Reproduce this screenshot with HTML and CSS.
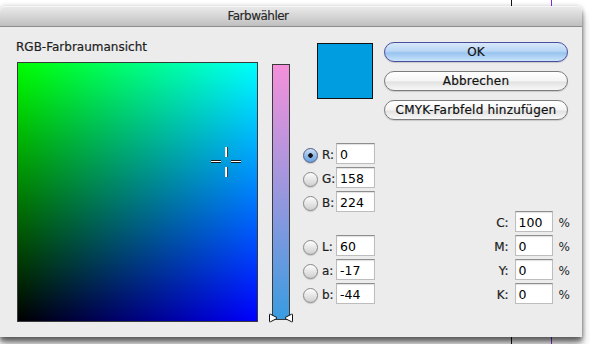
FILE: index.html
```html
<!DOCTYPE html>
<html lang="de">
<head>
  <meta charset="UTF-8">
  <title>Farbwähler</title>
  <link rel="stylesheet" href="styles.css">
</head>
<body>
<div class="doc-line black"></div>
<div class="doc-line purple"></div>

<div class="window">
  <div class="titlebar">Farbwähler</div>

  <div class="dialog-body">
    <div class="picker">
      <div class="picker-label">RGB-Farbraumansicht</div>
      <div class="color-field">
        <svg class="crosshair" width="32" height="32" viewBox="0 0 32 32">
          <rect x="15" y="1" width="1" height="10" fill="#e8e8e8"/>
          <rect x="16" y="1" width="1" height="10" fill="#ffffff"/>
          <rect x="17" y="1" width="1" height="10" fill="#5a3a30"/>
          <rect x="15" y="21" width="1" height="10" fill="#e8e8e8"/>
          <rect x="16" y="21" width="1" height="10" fill="#ffffff"/>
          <rect x="17" y="21" width="1" height="10" fill="#5a3a30"/>
          <rect x="1" y="14" width="10" height="1" fill="#1a1a1a"/>
          <rect x="1" y="15" width="10" height="1" fill="#ffffff"/>
          <rect x="1" y="16" width="10" height="1" fill="#1a1a1a"/>
          <rect x="21" y="14" width="10" height="1" fill="#1a1a1a"/>
          <rect x="21" y="15" width="10" height="1" fill="#ffffff"/>
          <rect x="21" y="16" width="10" height="1" fill="#1a1a1a"/>
        </svg>
      </div>
    </div>

    <div class="slider">
      <div class="slider-bar"></div>
      <svg class="slider-handles" width="26" height="10" viewBox="0 0 26 10">
        <path d="M1.5 1.5 Q1.5 0.8 2.4 1.2 L8.5 4.3 L8.5 5.7 L2.4 8.8 Q1.5 9.2 1.5 8.5 Z" fill="#fff" stroke="#111" stroke-width="1" stroke-linejoin="round"/>
        <path d="M24.5 1.5 Q24.5 0.8 23.6 1.2 L17.5 4.3 L17.5 5.7 L23.6 8.8 Q24.5 9.2 24.5 8.5 Z" fill="#fff" stroke="#111" stroke-width="1" stroke-linejoin="round"/>
      </svg>
    </div>

    <div class="controls">
      <div class="top-row">
        <div class="swatch"></div>
        <div class="buttons">
          <button class="aqua default">OK</button>
          <button class="aqua">Abbrechen</button>
          <button class="aqua">CMYK-Farbfeld hinzufügen</button>
        </div>
      </div>

      <div class="fields">
        <div class="modes">
          <div class="group">
            <div class="row"><span class="radio checked"></span><label>R:</label><input type="text" value="0"></div>
            <div class="row"><span class="radio"></span><label>G:</label><input type="text" value="158"></div>
            <div class="row"><span class="radio"></span><label>B:</label><input type="text" value="224"></div>
          </div>
          <div class="group lab">
            <div class="row"><span class="radio"></span><label>L:</label><input type="text" value="60"></div>
            <div class="row"><span class="radio"></span><label>a:</label><input type="text" value="-17"></div>
            <div class="row"><span class="radio"></span><label>b:</label><input type="text" value="-44"></div>
          </div>
        </div>

        <div class="cmyk">
          <div class="row"><label>C:</label><input type="text" value="100"><span class="unit">%</span></div>
          <div class="row"><label>M:</label><input type="text" value="0"><span class="unit">%</span></div>
          <div class="row"><label>Y:</label><input type="text" value="0"><span class="unit">%</span></div>
          <div class="row"><label>K:</label><input type="text" value="0"><span class="unit">%</span></div>
        </div>
      </div>
    </div>
  </div>
</div>
</body>
</html>
```

FILE: styles.css
```css
body {
  margin: 0;
  width: 590px;
  height: 344px;
  overflow: hidden;
  position: relative;
  background-color: #ffffff;
  font-family: "DejaVu Sans", sans-serif;
  font-size: 12px;
  color: #1e1e1e;
}

/* lines of the document behind the dialog */
.doc-line {
  position: absolute;
  top: 0;
  width: 1px;
  height: 344px;
}

.doc-line.black {
  left: 511px;
  background: #111;
}

.doc-line.purple {
  left: 551px;
  background: #8a2be2;
}

.window {
  position: relative;
  z-index: 1;
  margin-top: 6px;
  width: 582px;
  height: 331px;
  background-color: #ececec;
  border-radius: 5px 5px 0 0;
  box-shadow: 0 4px 4px rgba(0, 0, 0, 0.4), 0 8px 10px rgba(0, 0, 0, 0.35), 0 0 5px rgba(0, 0, 0, 0.2);
}

.titlebar {
  height: 20px;
  line-height: 21px;
  padding-right: 66px;
  text-align: center;
  font-size: 12px;
  letter-spacing: -0.5px;
  color: #262626;
  background: linear-gradient(#ebebeb, #d6d6d6 50%, #bfbfbf);
  border-bottom: 1px solid #8c8c8c;
  border-radius: 5px 5px 0 0;
  box-shadow: inset 0 1px 0 #f6f6f6;
  -webkit-text-stroke: 0.15px #262626;
}

.dialog-body {
  display: flex;
  padding: 13px 12px 0 16px;
}

.picker-label {
  line-height: 14px;
  height: 14px;
  margin-bottom: 8px;
  -webkit-text-stroke: 0.2px #1e1e1e;
}

.color-field {
  position: relative;
  margin-left: 1px;
  width: 239px;
  height: 258px;
  border: 1px solid #3a3a3a;
  background: linear-gradient(to bottom, #00ff00, #000000),
              linear-gradient(to right, #000000, #0000ff);
  background-blend-mode: screen;
}

.crosshair {
  position: absolute;
  left: 192px;
  top: 83px;
}

/* vertical slider for the R channel */
.slider {
  position: relative;
  margin-left: 14px;
  margin-top: 24px;
  width: 18px;
  height: 256px;
}

.slider-bar {
  width: 16px;
  height: 254px;
  border: 1px solid #3a3a3a;
  background: linear-gradient(#f590da, #9a97de 50%, #3a9ce0);
}

.slider-handles {
  position: absolute;
  left: -4px;
  bottom: -3px;
}

.controls {
  flex: 1;
  margin-left: 13px;
  padding-top: 2px;
}

.top-row {
  display: flex;
}

.swatch {
  margin-left: 14px;
  margin-top: 1px;
  width: 54px;
  height: 54px;
  border: 1px solid #111;
  background-color: #009ee0;
}

.buttons {
  display: flex;
  flex-direction: column;
  gap: 9px;
  margin-left: 11px;
  width: 184px;
}

button.aqua {
  height: 20px;
  padding: 0;
  font-family: "DejaVu Sans", sans-serif;
  font-size: 12px;
  letter-spacing: 0.2px;
  color: #111;
  border: 1px solid #7c7c7c;
  border-radius: 10px;
  background: linear-gradient(#ffffff, #f4f4f4 50%, #e2e2e2 55%, #f7f7f7);
  box-shadow: 0 1px 1px rgba(0, 0, 0, 0.15);
  -webkit-text-stroke: 0.2px #111;
}

button.aqua.default {
  border-color: #4a4f9c;
  background: linear-gradient(#d8e8fa, #b9d6f5 45%, #98c3ef 55%, #c9e3fb);
}

.fields {
  display: flex;
  margin-top: 23px;
}

.row {
  display: flex;
  align-items: center;
  height: 24px;
}

.row label {
  -webkit-text-stroke: 0.2px #1e1e1e;
}

.row input {
  box-sizing: border-box;
  height: 21px;
  margin-bottom: 3px;
  padding: 2px 0 0 3px;
  font-family: "DejaVu Sans", sans-serif;
  font-size: 12.5px;
  color: #000;
  background: #fff;
  border: 1px solid #bdbdbd;
  border-top-color: #8e8e8e;
  box-shadow: inset 0 1px 1px rgba(0, 0, 0, 0.12);
  outline: none;
}

.modes .row label {
  width: 14px;
  margin-left: 4px;
}

.modes .row input {
  width: 39px;
}

.group.lab {
  margin-top: 20px;
}

.radio {
  box-sizing: border-box;
  width: 15px;
  height: 15px;
  border-radius: 50%;
  border: 1px solid #8a8a8a;
  background: linear-gradient(#fdfdfd, #e4e4e4 55%, #cfcfcf);
  box-shadow: 0 1px 1px rgba(0, 0, 0, 0.15);
}

.radio.checked {
  border-color: #4f5c86;
  background: radial-gradient(circle, #111 0 2px, transparent 2.5px),
              linear-gradient(#cfe0f5, #8db7e8 55%, #6aa2e2);
}

.cmyk {
  margin-left: auto;
  padding-top: 68px;
}

.cmyk .row label {
  width: 20px;
  text-align: right;
  margin-right: 6px;
}

.cmyk .row input {
  width: 38px;
}

.unit {
  margin-left: 6px;
}
```
